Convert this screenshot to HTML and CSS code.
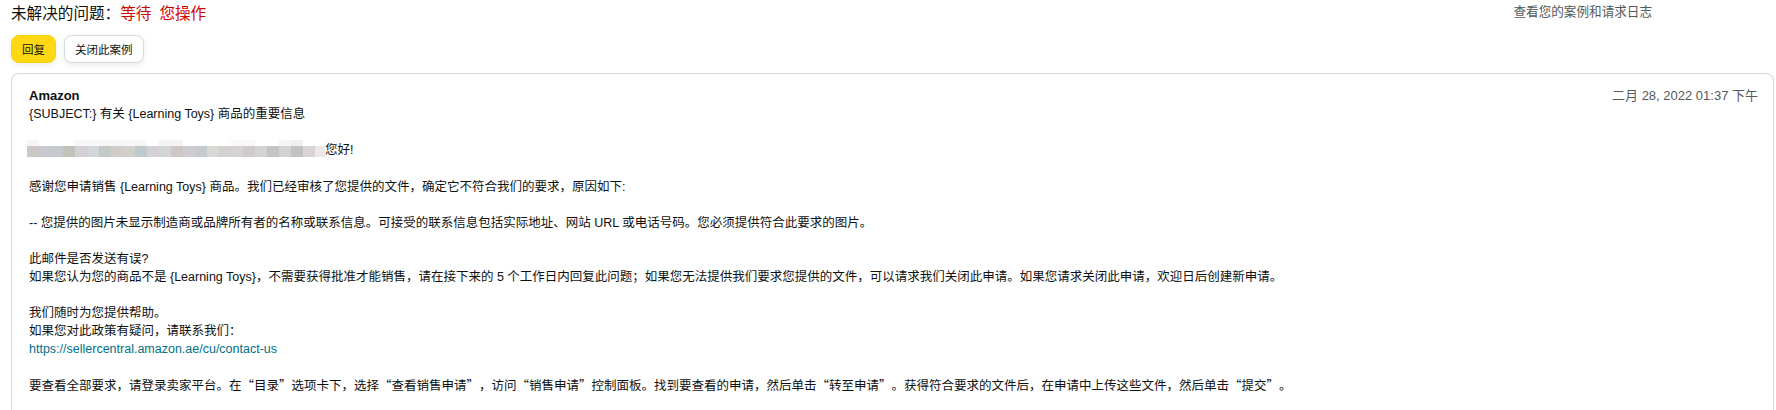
FILE: index.html
```html
<!DOCTYPE html>
<html lang="zh-CN">

<head>
    <meta charset="utf-8">
    <title>案例详情</title>
    <meta name="viewport" content="width=device-width, initial-scale=1">
    <link rel="stylesheet" href="styles.css">
</head>

<body>
    <div class="page">
        <div class="case-header">
            <h1 class="case-title">未解决的问题：<span class="status">等待</span><span class="status">您操作</span></h1>
            <a class="case-log" href="#">查看您的案例和请求日志</a>
        </div>

        <div class="actions">
            <button class="btn btn-primary">回复</button>
            <button class="btn">关闭此案例</button>
        </div>

        <div class="message">
            <div class="message-head">
                <div class="sender">
                    <div class="sender-name">Amazon</div>
                    <div>{SUBJECT:} 有关 {Learning Toys} 商品的重要信息</div>
                </div>
                <div class="message-date">二月 28, 2022 01:37 下午</div>
            </div>

            <div class="message-body">
                <div class="greeting">
                    <span class="mosaic">
                        <span class="mosaic-faint"></span>
                        <span class="mosaic-main"></span>
                    </span>
                    <span>您好!</span>
                </div>
                <p>感谢您申请销售 {Learning Toys} 商品。我们已经审核了您提供的文件，确定它不符合我们的要求，原因如下:</p>
                <p>-- 您提供的图片未显示制造商或品牌所有者的名称或联系信息。可接受的联系信息包括实际地址、网站 URL 或电话号码。您必须提供符合此要求的图片。</p>
                <p>此邮件是否发送有误?<br>
                    如果您认为您的商品不是 {Learning Toys}，不需要获得批准才能销售，请在接下来的 5 个工作日内回复此问题；如果您无法提供我们要求您提供的文件，可以请求我们关闭此申请。如果您请求关闭此申请，欢迎日后创建新申请。</p>
                <p>我们随时为您提供帮助。<br>
                    如果您对此政策有疑问，请联系我们：<br>
                    <a href="#">https://sellercentral.amazon.ae/cu/contact-us</a></p>
                <p class="cjk">要查看全部要求，请登录卖家平台。在“目录”选项卡下，选择“查看销售申请”，访问“销售申请”控制面板。找到要查看的申请，然后单击“转至申请”。获得符合要求的文件后，在申请中上传这些文件，然后单击“提交”。</p>
            </div>
        </div>
    </div>
</body>

</html>
```

FILE: styles.css
```css
* {
    margin: 0;
    padding: 0;
    box-sizing: border-box;
}

body {
    font-family: "Liberation Sans", "Noto Sans CJK SC", sans-serif;
    font-size: 12.5px;
    color: #0f1111;
    background: #fff;
}

.page {
    padding: 0 2px 0 11px;
}

.case-header {
    display: flex;
    justify-content: space-between;
    align-items: flex-start;
}

.case-title {
    font-size: 15.6px;
    font-weight: normal;
    line-height: 28px;
}

.case-title .status {
    color: #d40000;
    margin-right: 8px;
}

.case-log {
    font-size: 12.6px;
    line-height: 25px;
    color: #565959;
    text-decoration: none;
    margin-right: 122px;
}

.actions {
    display: flex;
    gap: 8px;
    margin-top: 7px;
}

.btn {
    font-family: inherit;
    font-size: 11.5px;
    color: #0f1111;
    height: 28px;
    padding: 0 10px;
    background: #fff;
    border: 1px solid #d5d9d9;
    border-radius: 8px;
    box-shadow: 0 2px 5px rgba(213, 217, 217, .5);
}

.btn-primary {
    background: #ffd814;
    border-color: #fcd200;
}

.message {
    margin-top: 10px;
    border: 1px solid #d5d9d9;
    border-bottom: 0;
    border-radius: 8px 8px 0 0;
    padding: 13px 15px 40px 17px;
    line-height: 18px;
}

.message-head {
    display: flex;
    justify-content: space-between;
}

.sender-name {
    font-size: 13px;
    font-weight: bold;
}

.message-date {
    font-size: 13px;
    color: #565959;
}

.message-body {
    margin-top: 18px;
}

.greeting {
    display: flex;
    align-items: flex-start;
    height: 19px;
    margin-bottom: 18px;
}

.mosaic {
    display: flex;
    flex-direction: column;
    margin: -1px 0 0 -2px;
}

.mosaic-faint,
.mosaic-main {
    display: block;
    width: 298px;
}

.mosaic-faint {
    height: 6px;
    background: linear-gradient(to right,
        #f6f6f6 0 12px, #fff 12px 48px, #f7f7f7 48px 120px, #fff 120px 132px,
        #f3f3f3 132px 156px, #fff 156px 204px, #f9f9f9 204px 228px, #fff 228px 252px,
        #f5f5f5 252px 264px, #f0f0f0 264px 276px, #fff 276px);
}

.mosaic-main {
    height: 11px;
    background: linear-gradient(to right,
        #cdc8c6 0 12px, #c9c7d1 12px 24px, #c4c9ca 24px 36px, #c2c1ba 36px 48px,
        #d3cfd6 48px 60px, #d1d6d9 60px 72px, #c3c9c3 72px 84px, #d2cbc8 84px 96px,
        #cfd1c7 96px 108px, #bfcacd 108px 120px, #d4d1d6 120px 132px, #d3d4d6 132px 144px,
        #cfc7c5 144px 156px, #cfcbd4 156px 168px, #c5cbcb 168px 180px, #d6d9d4 180px 192px,
        #d4d0d4 192px 204px, #d5d3d6 204px 216px, #cfcacd 216px 228px, #d3d5d2 228px 240px,
        #c4c4c3 240px 252px, #d4d2d0 252px 264px, #c2c2c5 264px 276px, #dbd2d7 276px 288px,
        #ece8e6 288px 298px);
}

.message-body p {
    margin-bottom: 18px;
}

.message-body p.cjk {
    font-family: "Noto Sans CJK SC", sans-serif;
    text-spacing-trim: space-all;
}

.message-body a {
    color: #007185;
    text-decoration: none;
}
```
